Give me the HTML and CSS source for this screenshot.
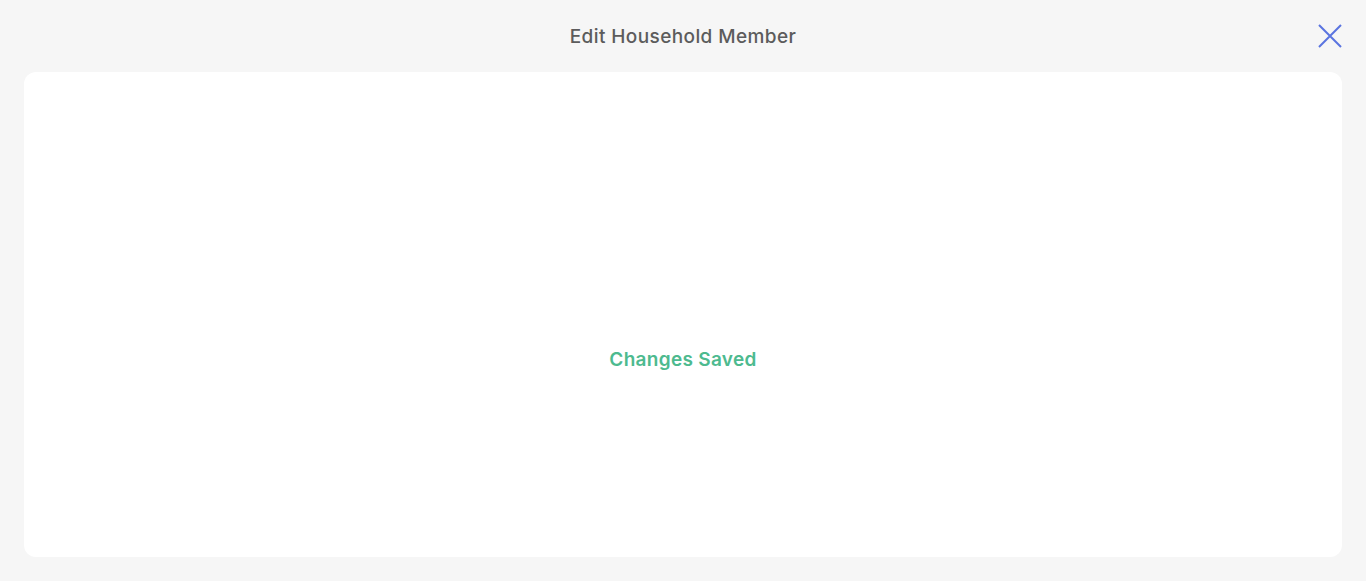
FILE: index.html
```html
<!DOCTYPE html>
<html lang="en">
<head>
<meta charset="utf-8">
<link rel="stylesheet" href="styles.css">
</head>
<body>
<div class="modal">
  <header class="modal-header">
    <h1 class="modal-title">Edit Household Member</h1>
    <button class="close-btn" aria-label="Close">
      <svg width="24" height="24" viewBox="0 0 24 24"><path d="M1 1 L23 23 M23 1 L1 23" stroke="#5a74e0" stroke-width="2" fill="none"/></svg>
    </button>
  </header>
  <main class="modal-body">
    <p class="saved">Changes Saved</p>
  </main>
</div>
</body>
</html>
```
FILE: styles.css
```css
html, body { margin: 0; padding: 0; height: 100%; }
body { background: #f6f6f6; font-family: Inter, "Noto Sans", sans-serif; }
.modal { display: flex; flex-direction: column; height: 581px; box-sizing: border-box; padding: 0 24px 24px; }
.modal-header { position: relative; height: 72px; display: flex; align-items: center; justify-content: center; }
.modal-title { margin: 0; font-size: 19px; font-weight: 500; color: #5c5c5c; letter-spacing: 0.4px; }
.close-btn { position: absolute; right: 0; top: 24px; width: 24px; height: 24px; padding: 0; border: 0; background: none; cursor: pointer; }
.close-btn svg { display: block; }
.modal-body { flex: 1; background: #fff; border-radius: 12px; display: flex; align-items: center; justify-content: center; padding-top: 90px; }
.saved { margin: 0; font-size: 19px; font-weight: 600; color: #4dba8f; letter-spacing: 0.3px; }
```
